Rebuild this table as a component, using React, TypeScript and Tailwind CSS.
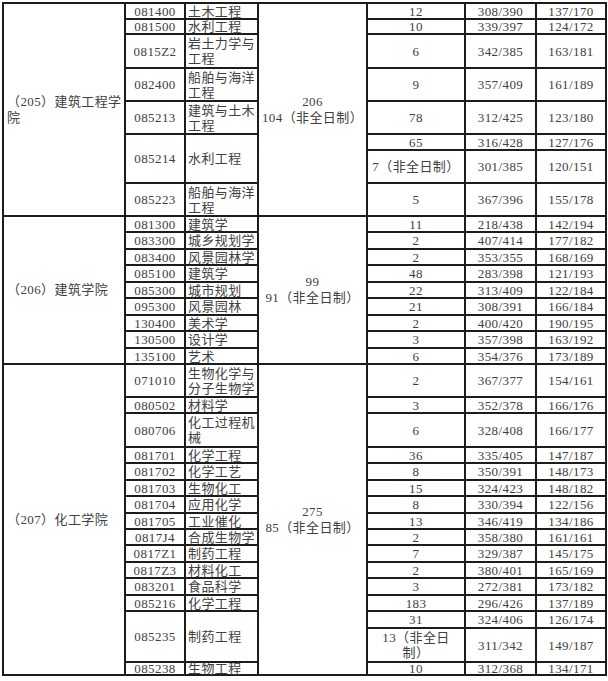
import React from 'react';

type Row = {
  h: number;
  code?: string;
  codeSpan?: number;
  name?: React.ReactNode;
  count: React.ReactNode;
  first: string;
  second: string;
  tight?: boolean;
};

type Section = {
  college: React.ReactNode;
  total: string;
  part: string;
  rows: Row[];
};

const sections: Section[] = [
  {
    college: (
      <>
        （205）建筑工程学
        <br />院
      </>
    ),
    total: '206',
    part: '104（非全日制）',
    rows: [
      { h: 16, code: '081400', name: '土木工程', count: '12', first: '308/390', second: '137/170' },
      { h: 15, code: '081500', name: '水利工程', count: '10', first: '339/397', second: '124/172' },
      { h: 34, code: '0815Z2', name: <>岩土力学与<br />工程</>, count: '6', first: '342/385', second: '163/181' },
      { h: 33, code: '082400', name: <>船舶与海洋<br />工程</>, count: '9', first: '357/409', second: '161/189' },
      { h: 33, code: '085213', name: <>建筑与土木<br />工程</>, count: '78', first: '312/425', second: '123/180' },
      { h: 16, code: '085214', codeSpan: 2, name: '水利工程', count: '65', first: '316/428', second: '127/176' },
      { h: 33, count: '7（非全日制）', first: '301/385', second: '120/151' },
      { h: 33, code: '085223', name: <>船舶与海洋<br />工程</>, count: '5', first: '367/396', second: '155/178' },
    ],
  },
  {
    college: '（206）建筑学院',
    total: '99',
    part: '91（非全日制）',
    rows: [
      { h: 16, code: '081300', name: '建筑学', count: '11', first: '218/438', second: '142/194' },
      { h: 17, code: '083300', name: '城乡规划学', count: '2', first: '407/414', second: '177/182' },
      { h: 16, code: '083400', name: '风景园林学', count: '2', first: '353/355', second: '168/169' },
      { h: 17, code: '085100', name: '建筑学', count: '48', first: '283/398', second: '121/193' },
      { h: 16, code: '085300', name: '城市规划', count: '22', first: '313/409', second: '122/184' },
      { h: 17, code: '095300', name: '风景园林', count: '21', first: '308/391', second: '166/184' },
      { h: 16, code: '130400', name: '美术学', count: '2', first: '400/420', second: '190/195' },
      { h: 17, code: '130500', name: '设计学', count: '3', first: '357/398', second: '163/192' },
      { h: 16, code: '135100', name: '艺术', count: '6', first: '354/376', second: '173/189' },
    ],
  },
  {
    college: '（207）化工学院',
    total: '275',
    part: '85（非全日制）',
    rows: [
      { h: 33, code: '071010', name: <>生物化学与<br />分子生物学</>, count: '2', first: '367/377', second: '154/161' },
      { h: 16, code: '080502', name: '材料学', count: '3', first: '352/378', second: '166/176' },
      { h: 34, code: '080706', name: <>化工过程机<br />械</>, count: '6', first: '328/408', second: '166/177' },
      { h: 16, code: '081701', name: '化学工程', count: '36', first: '335/405', second: '147/187' },
      { h: 17, code: '081702', name: '化学工艺', count: '8', first: '350/391', second: '148/173' },
      { h: 16, code: '081703', name: '生物化工', count: '15', first: '324/423', second: '148/182' },
      { h: 17, code: '081704', name: '应用化学', count: '8', first: '330/394', second: '122/156' },
      { h: 16, code: '081705', name: '工业催化', count: '13', first: '346/419', second: '134/186' },
      { h: 16, code: '0817J4', name: '合成生物学', count: '2', first: '358/380', second: '161/161' },
      { h: 17, code: '0817Z1', name: '制药工程', count: '7', first: '329/387', second: '145/175' },
      { h: 16, code: '0817Z3', name: '材料化工', count: '2', first: '380/401', second: '165/169' },
      { h: 17, code: '083201', name: '食品科学', count: '3', first: '272/381', second: '173/182' },
      { h: 16, code: '085216', name: '化学工程', count: '183', first: '296/426', second: '137/189' },
      { h: 17, code: '085235', codeSpan: 2, name: '制药工程', count: '31', first: '324/406', second: '126/174' },
      { h: 34, count: <>13（非全日<br />制）</>, first: '311/342', second: '149/187' },
      { h: 13, code: '085238', name: '生物工程', count: '10', first: '312/368', second: '134/171', tight: true },
    ],
  },
];

const cell = 'border-2 border-[#1c1c1c] p-0 align-middle whitespace-nowrap';

export default function App() {
  return (
    <div className="min-h-[681px] w-[608px] bg-white pl-[2px] pt-[2px]">
      <table
        className="w-[603px] table-fixed border-collapse text-[13px] leading-[13px] tracking-[0.4px] text-[#404040]"
        style={{ fontFamily: "'Liberation Serif', 'Noto Sans CJK SC', serif" }}
      >
        <colgroup>
          <col className="w-[122px]" />
          <col className="w-[60px]" />
          <col className="w-[73px]" />
          <col className="w-[109px]" />
          <col className="w-[98px]" />
          <col className="w-[71px]" />
          <col className="w-[70px]" />
        </colgroup>
        <tbody>
          {sections.map((s) =>
            s.rows.map((r, i) => (
              <tr key={s.total + i} style={{ height: r.h }} className={r.tight ? 'leading-[11px]' : ''}>
                {i === 0 && (
                  <td rowSpan={s.rows.length} className={`${cell} pl-[3px] text-left leading-[16px]`}>
                    {s.college}
                  </td>
                )}
                {r.code && (
                  <td rowSpan={r.codeSpan} className={`${cell} text-center`}>
                    {r.code}
                  </td>
                )}
                {r.code && (
                  <td rowSpan={r.codeSpan} className={`${cell} pl-[2px] text-left ${typeof r.name === 'string' ? '' : 'leading-[15px]'}`}>
                    {r.name}
                  </td>
                )}
                {i === 0 && (
                  <td rowSpan={s.rows.length} className={`${cell} text-center leading-[16px]`}>
                    {s.total}
                    <br />
                    {s.part}
                  </td>
                )}
                <td className={`${cell} text-center ${typeof r.count === 'string' ? '' : 'leading-[15px]'}`}>{r.count}</td>
                <td className={`${cell} text-center`}>{r.first}</td>
                <td className={`${cell} text-center`}>{r.second}</td>
              </tr>
            ))
          )}
        </tbody>
      </table>
    </div>
  );
}
